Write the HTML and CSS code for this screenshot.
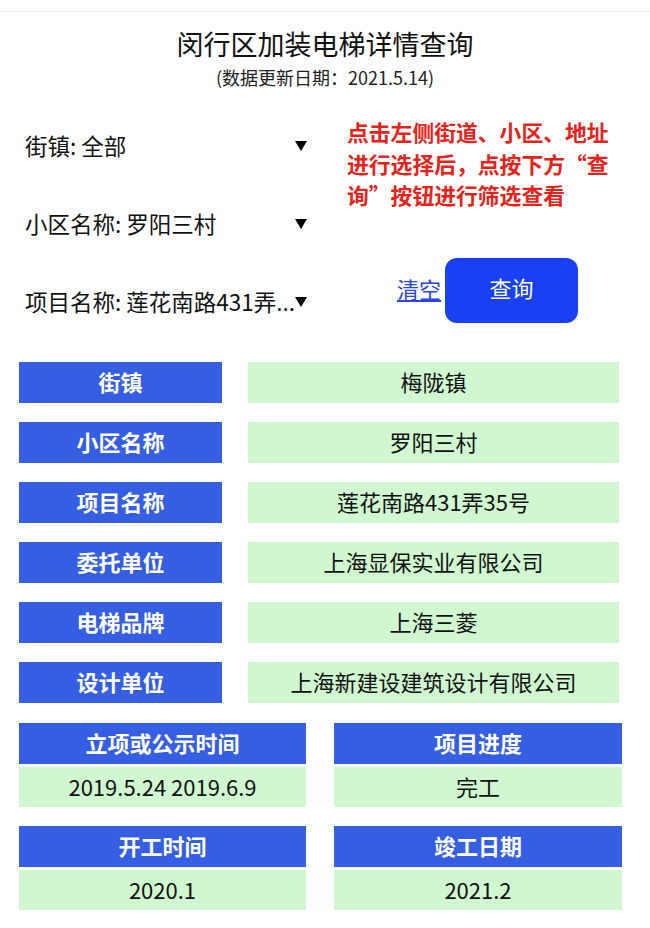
FILE: index.html
```html
<!DOCTYPE html>
<html lang="zh-CN">
<head>
<meta charset="utf-8">
<title>闵行区加装电梯详情查询</title>
<link rel="stylesheet" href="styles.css">
</head>
<body>
<div class="topbar"></div>
<header class="header">
  <h1 class="title">闵行区加装电梯详情查询</h1>
  <p class="subtitle">(数据更新日期：2021.5.14)</p>
</header>

<section class="filters">
  <div class="selects">
    <div class="select"><span class="select-text">街镇: 全部</span><span class="caret"></span></div>
    <div class="select"><span class="select-text">小区名称: 罗阳三村</span><span class="caret"></span></div>
    <div class="select"><span class="select-text">项目名称: 莲花南路431弄...</span><span class="caret"></span></div>
  </div>
  <div class="side">
    <p class="hint">点击左侧街道、小区、地址进行选择后，点按下方“查询”按钮进行筛选查看</p>
    <div class="actions">
      <a class="clear" href="#">清空</a>
      <button class="query" type="button">查询</button>
    </div>
  </div>
</section>

<section class="details">
  <div class="row"><div class="label">街镇</div><div class="value">梅陇镇</div></div>
  <div class="row"><div class="label">小区名称</div><div class="value">罗阳三村</div></div>
  <div class="row"><div class="label">项目名称</div><div class="value">莲花南路431弄35号</div></div>
  <div class="row"><div class="label">委托单位</div><div class="value">上海显保实业有限公司</div></div>
  <div class="row"><div class="label">电梯品牌</div><div class="value">上海三菱</div></div>
  <div class="row"><div class="label">设计单位</div><div class="value">上海新建设建筑设计有限公司</div></div>

  <div class="grid">
    <div class="cell"><div class="cell-label">立项或公示时间</div><div class="cell-value">2019.5.24 2019.6.9</div></div>
    <div class="cell"><div class="cell-label">项目进度</div><div class="cell-value">完工</div></div>
    <div class="cell"><div class="cell-label">开工时间</div><div class="cell-value">2020.1</div></div>
    <div class="cell"><div class="cell-label">竣工日期</div><div class="cell-value">2021.2</div></div>
  </div>
</section>
</body>
</html>
```

FILE: styles.css
```css
* { box-sizing: border-box; }

body {
  margin: 0;
  background: #ffffff;
  color: #111111;
  font-family: "Noto Sans CJK SC", "Noto Sans", sans-serif;
}

.topbar {
  height: 12px;
  border-bottom: 1px solid #f2f2f2;
}

.header {
  text-align: center;
  padding-top: 14px;
}

.title {
  margin: 0;
  font-size: 27px;
  line-height: 36px;
  font-weight: 400;
  color: #111;
}

.subtitle {
  margin: 3px 0 0;
  font-size: 18px;
  line-height: 24px;
  color: #222;
}

.filters {
  display: flex;
  margin-top: 18px;
  padding-left: 25px;
}

.selects {
  width: 282px;
  display: flex;
  flex-direction: column;
}

.select {
  height: 78px;
  display: flex;
  align-items: center;
  padding-bottom: 2px;
  font-size: 22.5px;
  color: #111;
}

.select-text {
  flex: 1;
  min-width: 0;
  white-space: nowrap;
}

.caret {
  flex: none;
  width: 0;
  height: 0;
  border-left: 6px solid transparent;
  border-right: 6px solid transparent;
  border-top: 10px solid #000;
  margin-top: 2px;
}

.side {
  margin-left: 40px;
  width: 270px;
}

.hint {
  margin: 9px 0 0;
  font-size: 21.8px;
  line-height: 31.5px;
  font-weight: 700;
  color: #e8211b;
}

.actions {
  display: flex;
  align-items: center;
  margin-top: 47px;
  padding-left: 50px;
}

.clear {
  font-size: 22px;
  line-height: 30px;
  color: #2b46dc;
  text-decoration: underline;
  margin-right: 4px;
  padding-bottom: 4px;
}

.query {
  width: 133px;
  height: 65px;
  border: none;
  border-radius: 12px;
  background: #1a40f5;
  color: #ffffff;
  font-family: "Noto Sans CJK SC", "Noto Sans", sans-serif;
  font-size: 22px;
  padding: 0 0 6px;
}

.details {
  margin-top: 21px;
  padding-left: 19px;
}

.row {
  display: flex;
  gap: 26px;
  margin-bottom: 19px;
}

.label {
  width: 203px;
  height: 41px;
  background: #355ee3;
  color: #ffffff;
  font-size: 22px;
  font-weight: 700;
  display: flex;
  align-items: center;
  justify-content: center;
  padding-bottom: 4px;
}

.value {
  width: 371px;
  height: 41px;
  background: #d0f7d0;
  color: #111;
  font-size: 22px;
  display: flex;
  align-items: center;
  justify-content: center;
  padding-bottom: 3px;
}

.grid {
  display: grid;
  grid-template-columns: 287px 288px;
  column-gap: 28px;
  row-gap: 19px;
  margin-top: 20px;
}

.cell {
  display: flex;
  flex-direction: column;
  gap: 3px;
}

.cell-label {
  height: 41px;
  background: #355ee3;
  color: #ffffff;
  font-size: 22px;
  font-weight: 700;
  display: flex;
  align-items: center;
  justify-content: center;
  padding-bottom: 4px;
}

.cell-value {
  height: 40px;
  background: #d0f7d0;
  color: #111;
  font-size: 22px;
  display: flex;
  align-items: center;
  justify-content: center;
  padding-bottom: 3px;
}
```
